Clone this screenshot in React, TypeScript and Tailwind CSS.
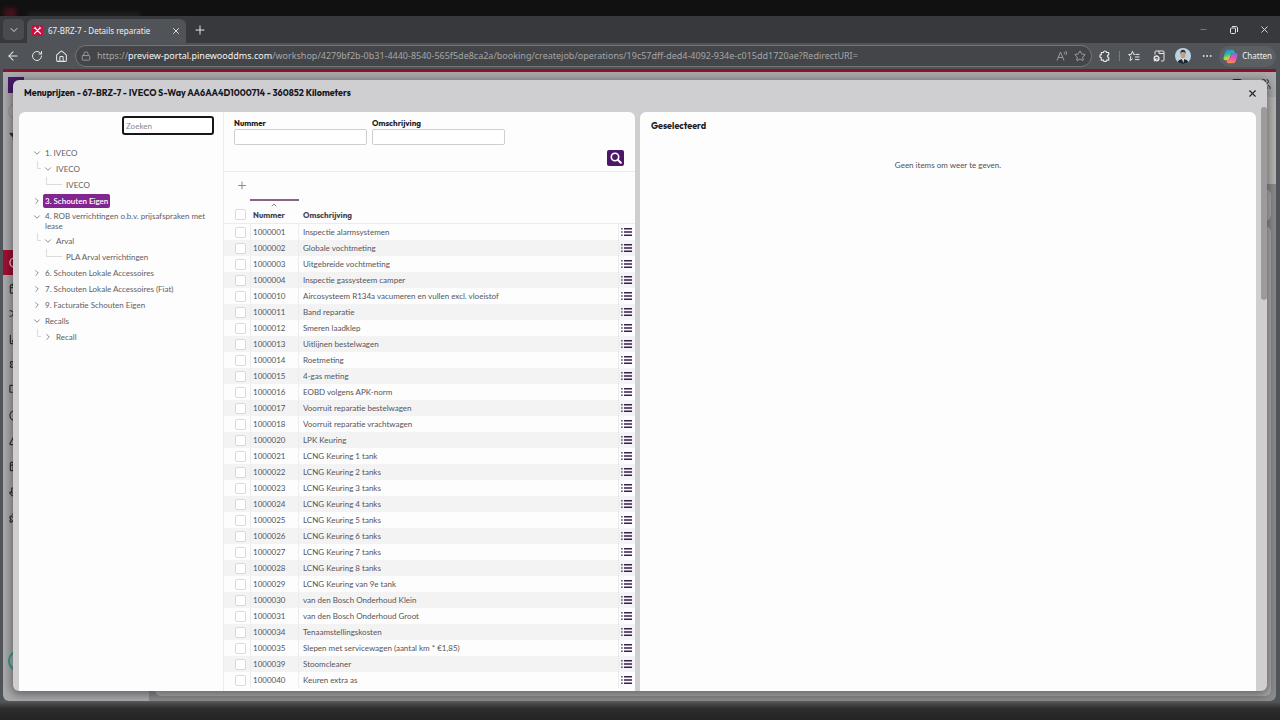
import { useState } from "react";
import type { ReactNode } from "react";
import {
  ArrowLeft,
  BarChart3,
  BookOpen,
  Calendar,
  ChevronDown,
  ChevronRight,
  ChevronUp,
  Circle,
  Clock,
  Filter,
  Hand,
  House,
  Lock,
  Minus,
  MoreHorizontal,
  Plus,
  Puzzle,
  RotateCw,
  Settings,
  Shuffle,
  Star,
  Table2,
  Triangle,
  Users,
  X,
} from "lucide-react";

type Level = 1 | 2 | 3;

interface TreeNode {
  label: string;
  level: Level;
  open?: boolean;
  selected?: boolean;
}

const tree: TreeNode[] = [
  { label: "1. IVECO", level: 1, open: true },
  { label: "IVECO", level: 2, open: true },
  { label: "IVECO", level: 3 },
  { label: "3. Schouten Eigen", level: 1, selected: true },
  { label: "4. ROB verrichtingen o.b.v. prijsafspraken met lease", level: 1, open: true },
  { label: "Arval", level: 2, open: true },
  { label: "PLA Arval verrichtingen", level: 3 },
  { label: "6. Schouten Lokale Accessoires", level: 1 },
  { label: "7. Schouten Lokale Accessoires (Fiat)", level: 1 },
  { label: "9. Facturatie Schouten Eigen", level: 1 },
  { label: "Recalls", level: 1, open: true },
  { label: "Recall", level: 2 },
];

const rows: [string, string][] = [
  ["1000001", "Inspectie alarmsystemen"],
  ["1000002", "Globale vochtmeting"],
  ["1000003", "Uitgebreide vochtmeting"],
  ["1000004", "Inspectie gassysteem camper"],
  ["1000010", "Aircosysteem R134a vacumeren en vullen excl. vloeistof"],
  ["1000011", "Band reparatie"],
  ["1000012", "Smeren laadklep"],
  ["1000013", "Uitlijnen bestelwagen"],
  ["1000014", "Roetmeting"],
  ["1000015", "4-gas meting"],
  ["1000016", "EOBD volgens APK-norm"],
  ["1000017", "Voorruit reparatie bestelwagen"],
  ["1000018", "Voorruit reparatie vrachtwagen"],
  ["1000020", "LPK Keuring"],
  ["1000021", "LCNG Keuring 1 tank"],
  ["1000022", "LCNG Keuring 2 tanks"],
  ["1000023", "LCNG Keuring 3 tanks"],
  ["1000024", "LCNG Keuring 4 tanks"],
  ["1000025", "LCNG Keuring 5 tanks"],
  ["1000026", "LCNG Keuring 6 tanks"],
  ["1000027", "LCNG Keuring 7 tanks"],
  ["1000028", "LCNG Keuring 8 tanks"],
  ["1000029", "LCNG Keuring van 9e tank"],
  ["1000030", "van den Bosch Onderhoud Klein"],
  ["1000031", "van den Bosch Onderhoud Groot"],
  ["1000034", "Tenaamstellingskosten"],
  ["1000035", "Slepen met servicewagen (aantal km * €1,85)"],
  ["1000039", "Stoomcleaner"],
  ["1000040", "Keuren extra as"],
];

function IconButton({ label, className = "", children }: { label: string; className?: string; children: ReactNode }) {
  return (
    <button type="button" aria-label={label} className={`flex shrink-0 items-center justify-center ${className}`}>
      {children}
    </button>
  );
}

function ListIcon() {
  return (
    <svg viewBox="0 0 11 8" className="h-2 w-[11px]" fill="#35204f" aria-hidden="true">
      <path d="M3 0h8v1.4H3zM3 3.3h8v1.4H3zM3 6.6h8V8H3z" />
      <path d="M0 0h1.7v1.4H0zM0 3.3h1.7v1.4H0zM0 6.6h1.7V8H0z" opacity=".75" />
    </svg>
  );
}

function Favicon() {
  return (
    <svg viewBox="0 0 11 11" className="size-[11px] shrink-0" aria-hidden="true">
      <rect width="11" height="11" rx="1" fill="#c3123f" />
      <path d="M3 3l5.600 5.600M8 3L2.400 8.600" stroke="#fff" strokeWidth="1.100" strokeLinecap="round" />
      <path d="M2.200 3.600l1.200-1.400M7.600 2.200l1.300 1.300" stroke="#fff" strokeWidth=".9" strokeLinecap="round" />
    </svg>
  );
}

function CopilotLogo() {
  return (
    <svg viewBox="0 0 15 15" className="size-[15px]" aria-hidden="true">
      <defs>
        <linearGradient id="cp-left" x1="0" y1="0" x2="0.3" y2="1">
          <stop offset="0" stopColor="#2a7df0" />
          <stop offset=".45" stopColor="#27b6a8" />
          <stop offset=".8" stopColor="#b8d24a" />
          <stop offset="1" stopColor="#f2b63c" />
        </linearGradient>
        <linearGradient id="cp-right" x1="0.6" y1="0" x2="0.3" y2="1">
          <stop offset="0" stopColor="#8a63ee" />
          <stop offset=".5" stopColor="#ee5aa0" />
          <stop offset="1" stopColor="#fb8a56" />
        </linearGradient>
      </defs>
      <path d="M5 .8h4.600c1 0 1.400.8 1.700 1.700l.5 1.600H9.400c-1 0-1.400.5-1.700 1.500l-1.200 4c-.3 1.100-.8 1.600-1.800 1.600H2.400C.8 11.200.2 9.900.6 8.400l1.600-5.400C2.700 1.500 3.500.8 5 .8z" fill="url(#cp-left)" />
      <path d="M10 14.200H5.400c-1 0-1.400-.8-1.700-1.700l-.4-1.300h1.900c1 0 1.500-.6 1.800-1.600l1.300-4.200c.3-.9.800-1.300 1.700-1.300h2.600c1.600 0 2.200 1.300 1.800 2.800L12.800 12c-.5 1.500-1.300 2.200-2.800 2.200z" fill="url(#cp-right)" />
    </svg>
  );
}

function Avatar() {
  return (
    <svg viewBox="0 0 16 16" className="size-4" role="img" aria-label="Profiel">
      <defs>
        <clipPath id="avatar-clip">
          <circle cx="8" cy="8" r="8" />
        </clipPath>
      </defs>
      <g clipPath="url(#avatar-clip)">
        <rect width="16" height="16" fill="#bcd3e0" />
        <path d="M2 16c.5-3.500 3-4.800 6-4.800s5.500 1.300 6 4.800z" fill="#20252f" />
        <path d="M7 11h2l-.6 4z" fill="#e9eef2" />
        <ellipse cx="8" cy="6.600" rx="2.500" ry="3.600" fill="#c99b86" />
        <path d="M5.300 6c-.3-3.200 1-4.200 2.700-4.200s3 1 2.700 4.200c-.5-1.600-1-2-2.700-2s-2.200.4-2.700 2z" fill="#37302e" />
      </g>
    </svg>
  );
}

function BrowserChrome() {
  return (
    <header className="shrink-0 text-[#e6e6e6]">
      <div className="h-4 overflow-hidden bg-[#111111]">
        <div className="flex h-5 items-end gap-3 pl-1 opacity-40 blur-[2px]">
          <span className="h-3 w-3 bg-[#8c1230]" />
          <span className="h-2 w-28 bg-[#333333]" />
        </div>
      </div>
      <div className="flex h-[27px] items-stretch bg-[#38393d]">
        <div className="flex w-[27px] shrink-0 items-center pt-[3px] pb-[3px] pl-[3px]">
          <IconButton label="Tabbladen zoeken" className="h-full w-[21px] rounded bg-[#494b4f]">
            <ChevronDown size={12} strokeWidth={1.800} />
          </IconButton>
        </div>
        <div className="mt-[3px] flex w-[159px] items-center gap-[5px] rounded-t-md bg-[#505357] pb-px pl-[5px] pr-1">
          <Favicon />
          <span className="flex-1 truncate text-[8px] text-[#f2f2f2]">67-BRZ-7 - Details reparatie</span>
          <IconButton label="Tabblad sluiten" className="size-3">
            <X size={10} strokeWidth={2.200} />
          </IconButton>
        </div>
        <IconButton label="Nieuw tabblad" className="ml-1 w-5">
          <Plus size={14} strokeWidth={1.700} />
        </IconButton>
        <div className="ml-auto flex items-center">
          <IconButton label="Minimaliseren" className="w-[30px]">
            <Minus size={9} strokeWidth={2} className="text-[#8b8c8f]" />
          </IconButton>
          <IconButton label="Vorig formaat" className="w-[31px]">
            <svg viewBox="0 0 8 8" className="size-2" fill="none" stroke="currentColor" strokeWidth="1">
              <rect x=".5" y="2" width="5" height="5.500" rx="1" />
              <path d="M2 .6h4.200c.8 0 1.300.5 1.300 1.300V6" />
            </svg>
          </IconButton>
          <IconButton label="Sluiten" className="w-[31px]">
            <X size={11} strokeWidth={2} />
          </IconButton>
        </div>
      </div>
      <div className="flex h-[26px] items-center bg-[#505357]">
        <div className="flex items-center pl-[3px]">
          <IconButton label="Terug" className="w-5"><ArrowLeft size={14} strokeWidth={1.800} /></IconButton>
          <IconButton label="Vernieuwen" className="w-[27px]"><RotateCw size={12} strokeWidth={2} /></IconButton>
          <IconButton label="Startpagina" className="w-[22px]"><House size={13} strokeWidth={1.900} /></IconButton>
        </div>
        <div className="ml-[3px] flex h-[22px] min-w-0 flex-1 items-center rounded-full border border-[#73757a] bg-[#434548] pr-0.5 pl-[5px]">
          <Lock size={10} strokeWidth={1.900} className="shrink-0 text-[#a9abad]" />
          <div className="ml-1.5 flex-1 truncate text-[9px] text-[#a3a5a8]">
            https://<span className="text-[#f4f4f4]">preview-portal.pinewooddms.com</span>
            /workshop/4279bf2b-0b31-4440-8540-565f5de8ca2a/booking/createjob/operations/19c57dff-ded4-4092-934e-c015dd1720ae?RedirectURI=
          </div>
          <IconButton label="Hardop voorlezen" className="w-[18px]">
            <svg viewBox="0 0 12 12" className="size-3" fill="none" stroke="#9b9da0" strokeWidth="1">
              <path d="M1 10.500L4.500 2 8 10.500M2.300 7.500h4.400M8 1.800c.6.7.7 1.700.2 2.500M9.700.9c1 1.200 1.100 3 .2 4.300" />
            </svg>
          </IconButton>
          <IconButton label="Favoriet" className="w-[18px]"><Star size={12} strokeWidth={1.800} className="text-[#a9abad]" /></IconButton>
        </div>
        <div className="flex items-center gap-px pr-1">
          <IconButton label="Extensies" className="w-[26px]">
            <svg viewBox="0 0 12 12" className="size-3" fill="none" stroke="currentColor" strokeWidth="1.200" strokeLinejoin="round">
              <path d="M2.300 2.500h2.200a1.500 1.500 0 0 1 3 0h2.200v2.300a1.300 1.300 0 0 0 0 2.600v2.800H7.500a1.500 1.500 0 0 1-3 0H2.300V7.700a1.500 1.500 0 0 1 0-3z" />
            </svg>
          </IconButton>
          <span className="h-2.5 w-px bg-[#77797d]" />
          <IconButton label="Favorieten" className="w-[25px]">
            <svg viewBox="0 0 12 12" className="size-3" fill="none" stroke="currentColor" strokeWidth="1">
              <path d="M7 4.400H5.700L4.500 1.200 3.300 4.400H.6l2.200 2.300-.7 3.900 2.600-1.900M7.500 4.400h4M7 7h4.500M7 9.600h4.500" />
            </svg>
          </IconButton>
          <IconButton label="Verzamelingen" className="w-[23px]">
            <svg viewBox="0 0 12 12" className="size-3" fill="none" stroke="currentColor" strokeWidth="1">
              <path d="M2 4.500V2c0-.6.4-1 1-1h7c.6 0 1 .4 1 1v8c0 .6-.4 1-1 1H8M6 1v2.500h5" />
              <circle cx="3.600" cy="8.400" r="2.400" strokeWidth="1.300" />
              <path d="M1.200 9h4.800M1 11l2-1.500" strokeWidth="1.200" />
            </svg>
          </IconButton>
          <IconButton label="Profiel" className="w-[23px]"><Avatar /></IconButton>
          <IconButton label="Meer" className="w-[23px]"><MoreHorizontal size={12} strokeWidth={2} /></IconButton>
          <button type="button" className="flex h-[21px] items-center gap-1 rounded-full bg-[#5b5e62] px-1 text-[8px] text-[#f2f2f2]">
            <CopilotLogo />
            <span>Chatten</span>
          </button>
        </div>
      </div>
    </header>
  );
}

const sidebarIcons = [Calendar, Shuffle, BarChart3, Settings, BookOpen, Clock, Triangle, Table2, Hand, Puzzle];

function PortalBackdrop() {
  return (
    <div className="flex h-full">
      <nav aria-label="Hoofdmenu" className="flex w-[146px] shrink-0 flex-col bg-[#aaaaac] text-[#303033]">
        <span className="mt-[5px] ml-[5px] h-4 w-4 bg-[#4b1a70]" />
        <span className="mt-2.5 ml-[5px] size-4 rounded-full border border-[#959597]" />
        <Filter size={10} fill="currentColor" className="mt-[13px] ml-1.5" />
        <div className="mt-[108px] flex h-[280px] flex-col">
          <span className="flex flex-1 items-center bg-[#9f0f31] pl-1.5 text-[#eac6ce]"><Circle size={11} strokeWidth={3} /></span>
          {sidebarIcons.map((Icon, i) => (
            <span key={i} className="flex flex-1 items-center pl-1.5"><Icon size={11} strokeWidth={2.600} /></span>
          ))}
        </div>
        <span className="mt-auto mb-[29px] ml-[5px] size-[22px] rounded-full border-2 border-[#3f9c88]" />
      </nav>
      <div className="flex min-w-0 flex-1 flex-col bg-[#8c8c8e]">
        <div className="flex h-[25px] shrink-0 justify-end gap-4 bg-[#aaaaac] pt-1.5 pr-[5px] text-[#24243a]">
          <Table2 size={12} />
          <Users size={12} />
        </div>
        <div className="h-[87px] shrink-0 bg-[#b6b6b4]" />
        <div className="mt-[5px] mr-[5px] ml-1.5 h-8 shrink-0 rounded-md bg-[#adadae]" />
        <div className="mt-[5px] mr-[5px] mb-[5px] ml-1.5 flex-1 rounded-md bg-[#adadae]" />
      </div>
    </div>
  );
}

function TreeItem({ node, selected, onSelect }: { node: TreeNode; selected: boolean; onSelect: () => void }) {
  const Chevron = node.open ? ChevronDown : ChevronRight;
  return (
    <li className="flex min-h-4 items-center pr-3.5">
      {node.level === 1 && <span className="w-3.5 shrink-0" />}
      {node.level === 2 && (
        <span className="mr-[3px] ml-[18px] h-2 w-1 shrink-0 self-start border-b border-l border-[#dcdcde]" />
      )}
      {node.level === 3 && (
        <span className="ml-[27px] h-2 w-4 shrink-0 self-start border-b border-l border-[#dcdcde]" />
      )}
      {node.level !== 3 && (
        <span className="flex h-4 w-2 shrink-0 items-center justify-center self-start text-[#77777b]">
          <Chevron size={10} strokeWidth={2} className="shrink-0" />
        </span>
      )}
      <button
        type="button"
        onClick={onSelect}
        className={
          selected
            ? "ml-0.5 rounded-[2px] bg-[#832590] px-0.5 py-0.5 text-left leading-[10px] font-semibold text-white"
            : "ml-0.5 px-0.5 py-0.5 text-left leading-[10px]"
        }
      >
        {node.label}
      </button>
    </li>
  );
}

const bodyFont = "font-['Segoe_UI','Lato',sans-serif]";

function TreePane() {
  const [active, setActive] = useState(tree.findIndex((n) => n.selected));
  return (
    <aside className={`w-[204px] shrink-0 text-[8px] text-[#606064] ${bodyFont}`}>
      <div className="flex h-[33px] justify-end pt-1 pr-[9px]">
        <input
          type="text"
          aria-label="Zoeken"
          placeholder="Zoeken"
          className="h-[19px] w-[92px] rounded-[3px] border-2 border-[#16161c] bg-white px-0.5 outline-none placeholder:text-[#88888c]"
        />
      </div>
      <ul>
        {tree.map((node, i) => (
          <TreeItem key={i} node={node} selected={i === active} onSelect={() => setActive(i)} />
        ))}
      </ul>
    </aside>
  );
}

const checkboxClass = "block size-[11px] appearance-none rounded-[2px] border border-[#dadadd] bg-white checked:bg-[#4b1a70]";
const headingFont = "font-['Outfit','Lato',sans-serif]";

function OperationsPane() {
  return (
    <div className="flex min-w-0 flex-1 flex-col border-l border-[#ececee]">
      <form className="h-[60px] shrink-0 border-b border-[#ececee] pt-[5px]" onSubmit={(e) => e.preventDefault()}>
        <div className="flex gap-[5px] pl-2.5">
          <label className={`block text-[8px] leading-3 font-bold text-[#1b1b24] ${headingFont}`}>
            Nummer
            <input type="text" className="block h-4 w-[133px] rounded-[2px] border border-[#cfcfd2] bg-white px-1 font-normal" />
          </label>
          <label className={`block text-[8px] leading-3 font-bold text-[#1b1b24] ${headingFont}`}>
            Omschrijving
            <input type="text" className="block h-4 w-[133px] rounded-[2px] border border-[#cfcfd2] bg-white px-1 font-normal" />
          </label>
        </div>
        <div className="mt-[5px] flex justify-end pr-[11px]">
          <button type="submit" aria-label="Zoeken" className="flex h-4 w-[17px] items-center justify-center rounded-[2px] bg-[#4c1767] text-white">
            <svg viewBox="0 0 12 12" className="size-3" fill="none" stroke="currentColor">
              <circle cx="5" cy="5" r="3.700" strokeWidth="1.600" />
              <path d="M7.800 7.800l3 3" strokeWidth="2" strokeLinecap="round" />
            </svg>
          </button>
        </div>
      </form>
      <div className="flex h-[27px] shrink-0 items-center pl-3 text-[#8a8a8e]">
        <IconButton label="Toevoegen" className="size-3"><Plus size={13} strokeWidth={2} /></IconButton>
      </div>
      <div className="min-h-0 flex-1 overflow-hidden">
        <table className={`w-full table-fixed border-separate border-spacing-0 text-left text-[8px] text-[#55555b] ${bodyFont}`}>
          <colgroup>
            <col className="w-[26px]" />
            <col className="w-[49px]" />
            <col />
            <col className="w-[17px]" />
          </colgroup>
          <thead>
            <tr className={`h-[25px] text-[#44444f] ${headingFont}`}>
              <th className="border-b border-[#ececee] p-0 pt-[7px] pl-[11px]">
                <input type="checkbox" aria-label="Alles selecteren" className={checkboxClass} />
              </th>
              <th className="border-t-2 border-b border-t-[#8a6288] border-b-[#ececee] p-0 pl-[3px] align-top font-bold" aria-sort="ascending">
                <ChevronUp size={8} strokeWidth={2} className="ml-[17px]" />
                <span className="block leading-3">Nummer</span>
              </th>
              <th className="border-b border-[#ececee] p-0 pt-[7px] pl-1 leading-3 font-bold">Omschrijving</th>
              <th className="border-b border-[#ececee] p-0" aria-label="Details" />
            </tr>
          </thead>
          <tbody>
            {rows.map(([nr, text]) => (
              <tr key={nr} className="h-4 even:bg-[#f3f3f4]">
                <td className="p-0 pl-[11px]">
                  <input type="checkbox" aria-label={`Selecteer ${nr}`} className={checkboxClass} />
                </td>
                <td className="border-x border-[#ececee] p-0 pl-0.5 leading-3">{nr}</td>
                <td className="truncate p-0 pl-1 leading-3">{text}</td>
                <td className="border-l border-[#ececee] p-0 pl-0.5">
                  <IconButton label={`Details ${nr}`}><ListIcon /></IconButton>
                </td>
              </tr>
            ))}
          </tbody>
        </table>
      </div>
    </div>
  );
}

export default function App() {
  return (
    <div className="flex h-screen flex-col overflow-hidden bg-[#505357] font-['Segoe_UI','Noto_Sans',sans-serif]">
      <BrowserChrome />
      <main className="relative mr-1 ml-[3px] min-h-0 flex-1 overflow-hidden rounded-b-md border-t-[3px] border-[#8f1029]">
        <PortalBackdrop />
        <section
          role="dialog"
          aria-labelledby="dialog-title"
          className="absolute top-2 right-[9px] bottom-2.5 left-2.5 flex flex-col overflow-hidden rounded-md bg-[#cfcfd2] shadow-[0_2px_10px_2px_rgba(0,0,0,0.4)]"
        >
          <div className="flex h-8 shrink-0 items-center justify-between pr-[9px] pb-1.5 pl-[11px]">
            <h1 id="dialog-title" className={`text-[9px] font-bold text-[#16161e] ${headingFont}`}>
              Menuprijzen - 67-BRZ-7 - IVECO S-Way AA6AA4D1000714 - 360852 Kilometers
            </h1>
            <IconButton label="Dialoog sluiten" className="size-3 text-[#1f1f2c]"><X size={11} strokeWidth={2.400} /></IconButton>
          </div>
          <div className="flex min-h-0 flex-1 pl-1.5">
            <div className="mr-[5px] flex min-w-0 flex-1 overflow-hidden rounded-t-md bg-[#fdfdfd]">
              <TreePane />
              <OperationsPane />
            </div>
            <div className="mr-[5px] min-w-0 flex-1 rounded-t-md bg-[#fdfdfd]">
              <h2 className={`px-[11px] pt-2 text-[9px] leading-3 font-bold text-[#1b1b24] ${headingFont}`}>Geselecteerd</h2>
              <p className={`mt-[27px] text-center text-[8px] leading-3 text-[#505056] ${bodyFont}`}>Geen items om weer te geven.</p>
            </div>
            <div className="-mt-[5px] w-1.5 shrink-0">
              <div className="h-[193px] rounded-sm bg-[#9b9b9d]" />
            </div>
          </div>
        </section>
      </main>
      <footer className="h-[19px] shrink-0 bg-linear-to-b from-[#58595b] via-[#2d2d2d] via-40% to-[#242424]" />
    </div>
  );
}
